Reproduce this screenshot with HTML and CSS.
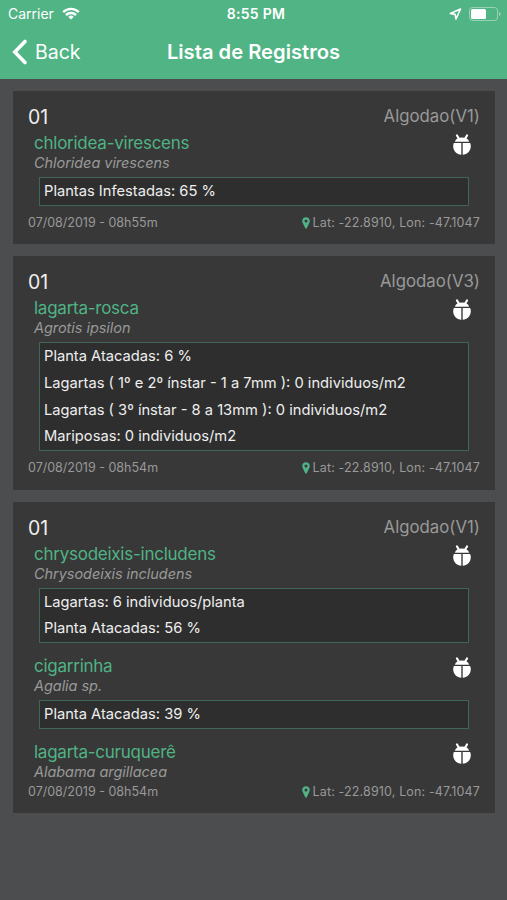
FILE: index.html
```
<!DOCTYPE html>
<html lang="pt-BR">
<head>
	<meta charset="UTF-8">
	<title>Lista de Registros</title>
	<link rel="stylesheet" href="styles.css">
</head>
<body>
	<svg class="sprite">
		<symbol id="bug" viewBox="0 0 18 21">
			<path d="M4 1.500l1.800 3M14 1.500l-1.800 3" fill="none" stroke="#fff" stroke-width="2.200" stroke-linecap="round"/>
			<path d="M1.800 7.700C2.800 5.100 5.300 3.600 9 3.600s6.200 1.500 7.200 4.100z" fill="#fff"/>
			<path d="M.9 8.900h7.400v11.900C3.900 20.400.2 17 .2 12.200c0-1.200.2-2.300.7-3.300zM17.100 8.900H9.700v11.900c4.400-.4 8.100-3.800 8.100-8.600 0-1.200-.2-2.300-.7-3.300z" fill="#fff"/>
		</symbol>
		<symbol id="pin" viewBox="0 0 8 12">
			<path d="M4 .3C1.800.3.200 1.900.200 4c0 1 .4 1.700.9 2.700L3.100 11.100c.4.700 1.400.7 1.800 0l2-4.400c.5-1 .9-1.700.9-2.700C7.800 1.900 6.200.3 4 .3zm0 2.200a1.500 1.500 0 1 1 0 3 1.500 1.500 0 0 1 0-3z" fill="#4fb385" fill-rule="evenodd"/>
		</symbol>
	</svg>
	<div class="header">
		<div class="status">
			<div class="carrier">
				<span>Carrier</span>
				<svg width="18" height="13" viewBox="0 0 18 13" fill="none" stroke="#fff" stroke-width="2.400">
					<path d="M1.200 5.100a11 11 0 0 1 15.600 0M4 8.100a7 7 0 0 1 10 0"/>
					<path d="M9 12.600L6.300 9.900a3.800 3.800 0 0 1 5.400 0z" fill="#fff" stroke="none"/>
				</svg>
			</div>
			<div class="time">8:55 PM</div>
			<div class="power">
				<svg width="13" height="12" viewBox="0 0 13 12" fill="none" stroke="#fff" stroke-width="1.600" stroke-linejoin="round">
					<path d="M11.500 1L1.300 5.500l4.800.9.900 4.600z"/>
				</svg>
				<svg width="32" height="14" viewBox="0 0 32 14">
					<rect x=".5" y=".5" width="28" height="13" rx="3" fill="none" stroke="#fff" stroke-opacity=".4"/>
					<rect x="2" y="2" width="15" height="10" rx="1.500" fill="#fff"/>
					<path d="M30 4.800q1.700.8 1.700 2.200T30 9.200z" fill="#fff" fill-opacity=".4"/>
				</svg>
			</div>
		</div>
		<div class="nav">
			<a href="javascript:;" class="back">
				<svg width="16" height="26" viewBox="0 0 16 26" fill="none" stroke="#fff" stroke-width="3.600" stroke-linecap="round">
					<path d="M13 2.500L2.800 13 13 23.500"/>
				</svg>
				<span>Back</span>
			</a>
			<h1>Lista de Registros</h1>
		</div>
	</div>
	<div class="list">
		<div class="card">
			<div class="card_top"><b>01</b><span>Algodao(V1)</span></div>
			<div class="pest">
				<div class="pest_name">chloridea-virescens</div>
				<div class="latin">Chloridea virescens</div>
				<svg class="bug"><use href="#bug"/></svg>
				<ul>
					<li>Plantas Infestadas: 65 %</li>
				</ul>
			</div>
			<div class="card_foot">
				<span class="date">07/08/2019 - 08h55m</span>
				<span class="place"><svg class="pin"><use href="#pin"/></svg>Lat: -22.8910, Lon: -47.1047</span>
			</div>
		</div>
		<div class="card">
			<div class="card_top"><b>01</b><span>Algodao(V3)</span></div>
			<div class="pest">
				<div class="pest_name">lagarta-rosca</div>
				<div class="latin">Agrotis ipsilon</div>
				<svg class="bug"><use href="#bug"/></svg>
				<ul>
					<li>Planta Atacadas: 6 %</li>
					<li>Lagartas ( 1º e 2º ínstar - 1 a 7mm ): 0 individuos/m2</li>
					<li>Lagartas ( 3º ínstar - 8 a 13mm ): 0 individuos/m2</li>
					<li>Mariposas: 0 individuos/m2</li>
				</ul>
			</div>
			<div class="card_foot">
				<span class="date">07/08/2019 - 08h54m</span>
				<span class="place"><svg class="pin"><use href="#pin"/></svg>Lat: -22.8910, Lon: -47.1047</span>
			</div>
		</div>
		<div class="card">
			<div class="card_top"><b>01</b><span>Algodao(V1)</span></div>
			<div class="pest">
				<div class="pest_name">chrysodeixis-includens</div>
				<div class="latin">Chrysodeixis includens</div>
				<svg class="bug"><use href="#bug"/></svg>
				<ul>
					<li>Lagartas: 6 individuos/planta</li>
					<li>Planta Atacadas: 56 %</li>
				</ul>
			</div>
			<div class="pest">
				<div class="pest_name">cigarrinha</div>
				<div class="latin">Agalia sp.</div>
				<svg class="bug"><use href="#bug"/></svg>
				<ul>
					<li>Planta Atacadas: 39 %</li>
				</ul>
			</div>
			<div class="pest">
				<div class="pest_name">lagarta-curuquerê</div>
				<div class="latin">Alabama argillacea</div>
				<svg class="bug"><use href="#bug"/></svg>
			</div>
			<div class="card_foot">
				<span class="date">07/08/2019 - 08h54m</span>
				<span class="place"><svg class="pin"><use href="#pin"/></svg>Lat: -22.8910, Lon: -47.1047</span>
			</div>
		</div>
	</div>
</body>
</html>
```
FILE: styles.css
```
body,div,h1,ul,li {
	margin:0;
	padding:0;
}
body {
	height:900px;
	background-color: #4c4d4f;
	font-family: Inter,"Liberation Sans",sans-serif;
	color:#eee;
	overflow: hidden;
}
a {
	color:#fff;
	text-decoration: none;
}
ul {
	list-style: none;
}
svg {
	display: block;
}
.sprite {
	width:0;
	height:0;
	position: absolute;
}
.header {
	height:79px;
	background-color: #50b485;
	color:#fff;
}
.status {
	display: grid;
	grid-template-columns: 1fr auto 1fr;
	align-items: center;
	height:27px;
	padding:0 6px 0 8px;
	font-size: 14px;
}
.carrier , .power {
	display: flex;
	align-items: center;
	gap:8px;
}
.power {
	gap:7px;
	justify-content: flex-end;
}
.time {
	font-weight: 600;
	letter-spacing: 0.3px;
	padding-left: 3px;
}
.nav {
	display: grid;
	grid-template-columns: 1fr auto 1fr;
	align-items: center;
	height:49px;
	padding:0 12px;
}
.back {
	display: flex;
	align-items: center;
	gap:7px;
	font-size: 19.5px;
}
.nav h1 {
	font-size: 20.2px;
	font-weight: 600;
}
.list {
	display: flex;
	flex-direction: column;
	gap:12px;
	padding:12px 12px 0 13px;
}
.card {
	padding:13px 15px 13.3px;
	background-color: #383838;
}
.card_top {
	display: flex;
	justify-content: space-between;
	height:26px;
	margin-bottom: 2px;
	line-height: 26px;
}
.card_top b {
	font-size: 19.5px;
	font-weight: 400;
}
.card_top span {
	font-size: 16.8px;
	line-height: 25px;
	color:#999;
}
.pest {
	display: grid;
	grid-template-columns: 1fr 18px;
	padding:0 9px 0 6px;
}
.pest + .pest {
	margin-top: 6px;
}
.pest_name {
	font-size: 17px;
	line-height: 22px;
	letter-spacing: -0.25px;
	color:#4fb385;
}
.latin {
	grid-row: 2;
	font-size: 14.5px;
	line-height: 18px;
	letter-spacing: -0.05px;
	font-style: italic;
	color:#999;
}
.bug {
	grid-column: 2;
	grid-row: 1 / 3;
	width:18px;
	height:21px;
	margin-top: 2px;
}
.pest ul {
	grid-column: 1 / 3;
	margin:5px 2px 6px 5px;
	border:1px solid #406656;
	background-color: #2e2e2e;
}
.pest li {
	padding-left: 4px;
	font-size: 14.7px;
	line-height: 26.8px;
}
.card_foot {
	display: flex;
	justify-content: space-between;
	margin-top: 3px;
	font-size: 12.5px;
	line-height: 16px;
	color:#999;
}
.place {
	display: flex;
	align-items: center;
	gap:3px;
	letter-spacing: 0.14px;
}
.pin {
	width:8px;
	height:12px;
}
```
